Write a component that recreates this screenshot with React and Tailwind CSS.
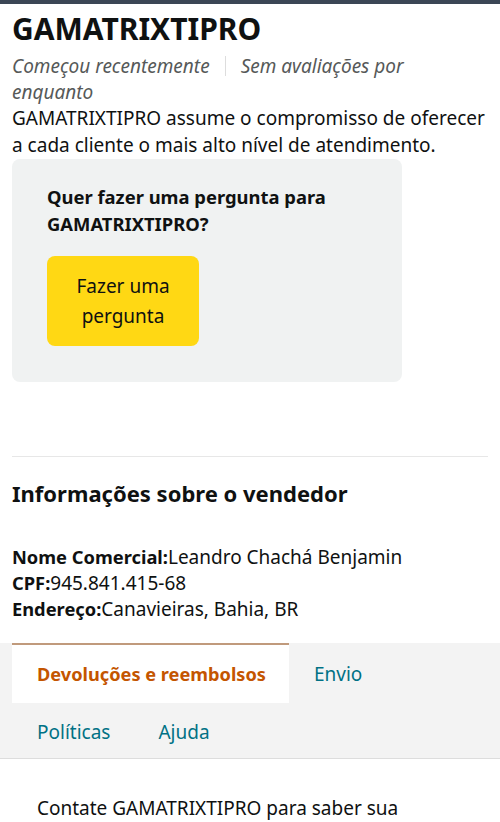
export default function App() {
  return (
    <div className="min-h-screen bg-white text-[#0f1111]">
      <div className="h-[4px] bg-[#3b4655]" />
      <div className="font-['Noto_Sans',sans-serif]">
        <div className="px-3 pt-[6px]">
          <h1 className="text-[30px] leading-[38px] font-bold">GAMATRIXTIPRO</h1>
          <p className="mt-[5px] text-[19px] leading-[26px] italic text-[#565959]">
            <span>Começou recentemente</span>
            <span className="inline-block w-px h-[20px] mx-[15px] bg-[#dddddd] align-[-3px]" />
            <span>Sem avaliações por</span>
            <br />
            <span>enquanto</span>
          </p>
          <p className="text-[19px] leading-[27px]">
            GAMATRIXTIPRO assume o compromisso de oferecer a cada cliente o mais alto nível de atendimento.
          </p>
          <div className="w-[390px] h-[223px] rounded-[8px] bg-[#f0f2f2] px-[35px] pt-[24px]">
            <p className="text-[18.4px] leading-[27px] font-bold">Quer fazer uma pergunta para GAMATRIXTIPRO?</p>
            <button className="mt-[19px] w-[152px] h-[90px] rounded-[8px] bg-[#ffd814] text-[19px] leading-[30px]">
              Fazer uma<br />pergunta
            </button>
          </div>
          <div className="mt-[74px] h-px bg-[#e7e7e7]" />
          <h2 className="mt-[21px] text-[22px] leading-[30px] font-bold">Informações sobre o vendedor</h2>
          <div className="mt-[36px] text-[19px] leading-[26px]">
            <p><b className="text-[18.3px]">Nome Comercial:</b>Leandro Chachá Benjamin</p>
            <p><b className="text-[18.3px]">CPF:</b>945.841.415-68</p>
            <p><b className="text-[18.3px]">Endereço:</b>Canavieiras, Bahia, BR</p>
          </div>
        </div>
        <div className="mt-[21px] bg-[#f3f3f3] border-b border-[#dddddd] pl-3 text-[19px] leading-[26px]">
          <div className="flex">
            <div className="w-[277px] h-[60px] bg-white border-t-2 border-[#c09a7c] pl-[25px] pt-[16px] text-[18.2px] font-bold text-[#c45500]">
              Devoluções e reembolsos
            </div>
            <div className="pl-[25px] pt-[18px] text-[#007185]">Envio</div>
          </div>
          <div className="flex gap-[48px] pl-[25px] h-[55px] pt-[16px] text-[#007185]">
            <span>Políticas</span>
            <span>Ajuda</span>
          </div>
        </div>
        <p className="pl-[37px] mt-[36px] text-[19px] leading-[26px]">Contate GAMATRIXTIPRO para saber sua</p>
      </div>
    </div>
  )
}
